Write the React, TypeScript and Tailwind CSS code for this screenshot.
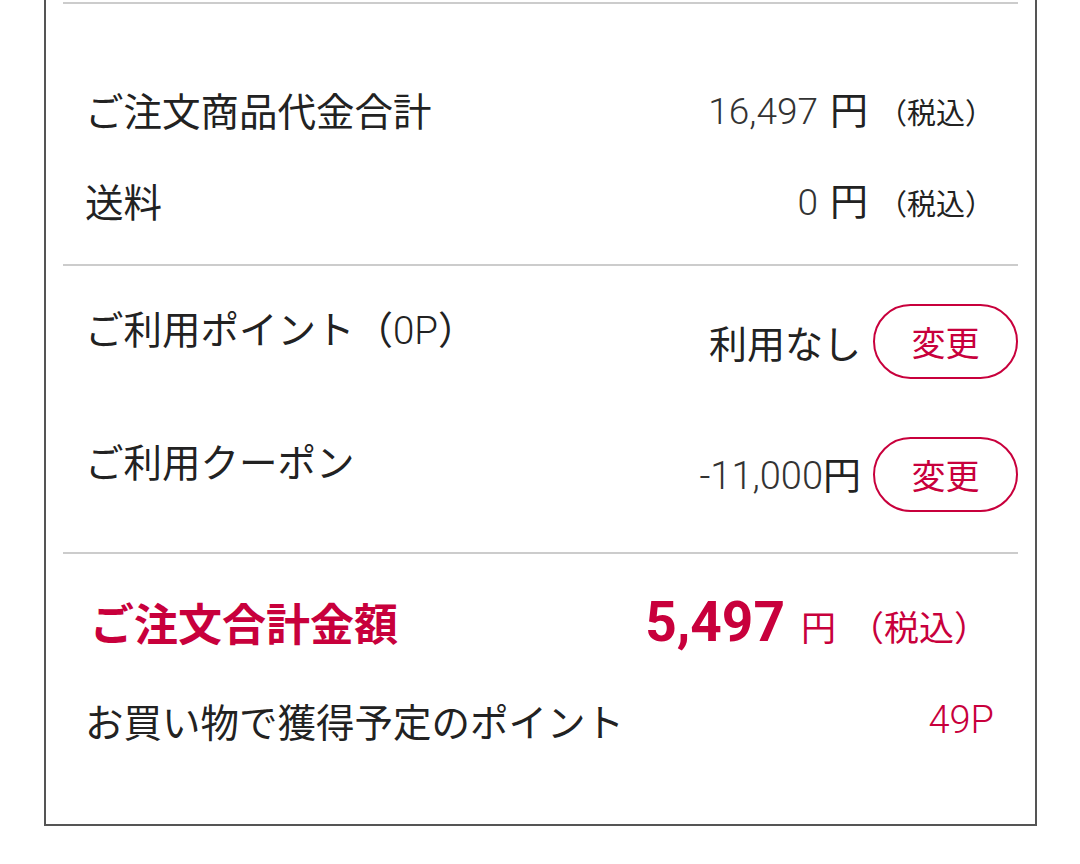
import React from "react";

const CJK = { fontFamily: '"Noto Sans CJK JP", "Noto Sans", sans-serif' };
const NUM = { fontFamily: 'Roboto, "Noto Sans CJK JP", sans-serif' };

function ChangeButton() {
  return (
    <button
      className="w-[145px] h-[75px] rounded-full border-2 border-[#c8003c] text-[#c8003c] text-[34px] flex items-center justify-center bg-white"
      style={CJK}
    >
      変更
    </button>
  );
}

function Divider() {
  return <div className="h-[2px] bg-[#cccccc]" />;
}

export default function App() {
  return (
    <div className="w-[1080px] h-[864px] bg-white pl-[44px]" style={CJK}>
      <div className="w-[993px] h-[826px] border-x-2 border-b-2 border-[#555555] px-[17px] pt-[2px] flex flex-col text-[#222222]">
        <Divider />
        {/* Section 1 */}
        <div className="pt-[79px] pb-[38px] flex flex-col gap-[39px]">
          <div className="h-[52px] pl-[22px] pr-[24px] flex items-center justify-between">
            <span className="text-[38.5px] leading-[52px]">ご注文商品代金合計</span>
            <span className="flex items-baseline">
              <span className="text-[37px] font-light text-[#333333]" style={NUM}>16,497</span>
              <span className="text-[38px] ml-[12px]">円</span>
              <span className="text-[29px] ml-[10px]">（税込）</span>
            </span>
          </div>
          <div className="h-[52px] pl-[22px] pr-[24px] flex items-center justify-between">
            <span className="text-[38.5px] leading-[52px]">送料</span>
            <span className="flex items-baseline">
              <span className="text-[37px] font-light text-[#333333]" style={NUM}>0</span>
              <span className="text-[38px] ml-[12px]">円</span>
              <span className="text-[29px] ml-[10px]">（税込）</span>
            </span>
          </div>
        </div>
        <Divider />
        {/* Section 2 */}
        <div className="pt-[38px] pb-[40px] flex flex-col gap-[58px]">
          <div className="h-[75px] pl-[22px] flex items-start justify-between">
            <span className="text-[38.5px] leading-[46px]">
              ご利用ポイント（<span className="font-light" style={NUM}>0P</span>）
            </span>
            <div className="h-[75px] flex items-center gap-[12px]">
              <span className="text-[38px]">利用なし</span>
              <ChangeButton />
            </div>
          </div>
          <div className="h-[75px] pl-[22px] flex items-start justify-between">
            <span className="text-[38.5px] leading-[46px]">ご利用クーポン</span>
            <div className="h-[75px] flex items-center gap-[12px]">
              <span className="flex items-baseline">
                <span className="text-[38px] font-light text-[#333333]" style={NUM}>-11,000</span>
                <span className="text-[38px]">円</span>
              </span>
              <ChangeButton />
            </div>
          </div>
        </div>
        <Divider />
        {/* Section 3 */}
        <div className="pt-[38px] flex flex-col gap-[42px]">
          <div className="h-[60px] px-[24px] flex items-center justify-between text-[#c8003c]">
            <span className="text-[44px] font-bold leading-[60px] pl-[3px]">ご注文合計金額</span>
            <span className="flex items-baseline pr-[5px]">
              <span className="text-[55px] font-bold" style={NUM}>5,497</span>
              <span className="text-[35px] ml-[16px]">円</span>
              <span className="text-[35px] ml-[13px]">（税込）</span>
            </span>
          </div>
          <div className="h-[52px] pl-[22px] pr-[24px] flex items-center justify-between">
            <span className="text-[38.5px] leading-[52px]">お買い物で獲得予定のポイント</span>
            <span className="text-[38px] font-light text-[#c8003c]" style={NUM}>49P</span>
          </div>
        </div>
      </div>
    </div>
  );
}
